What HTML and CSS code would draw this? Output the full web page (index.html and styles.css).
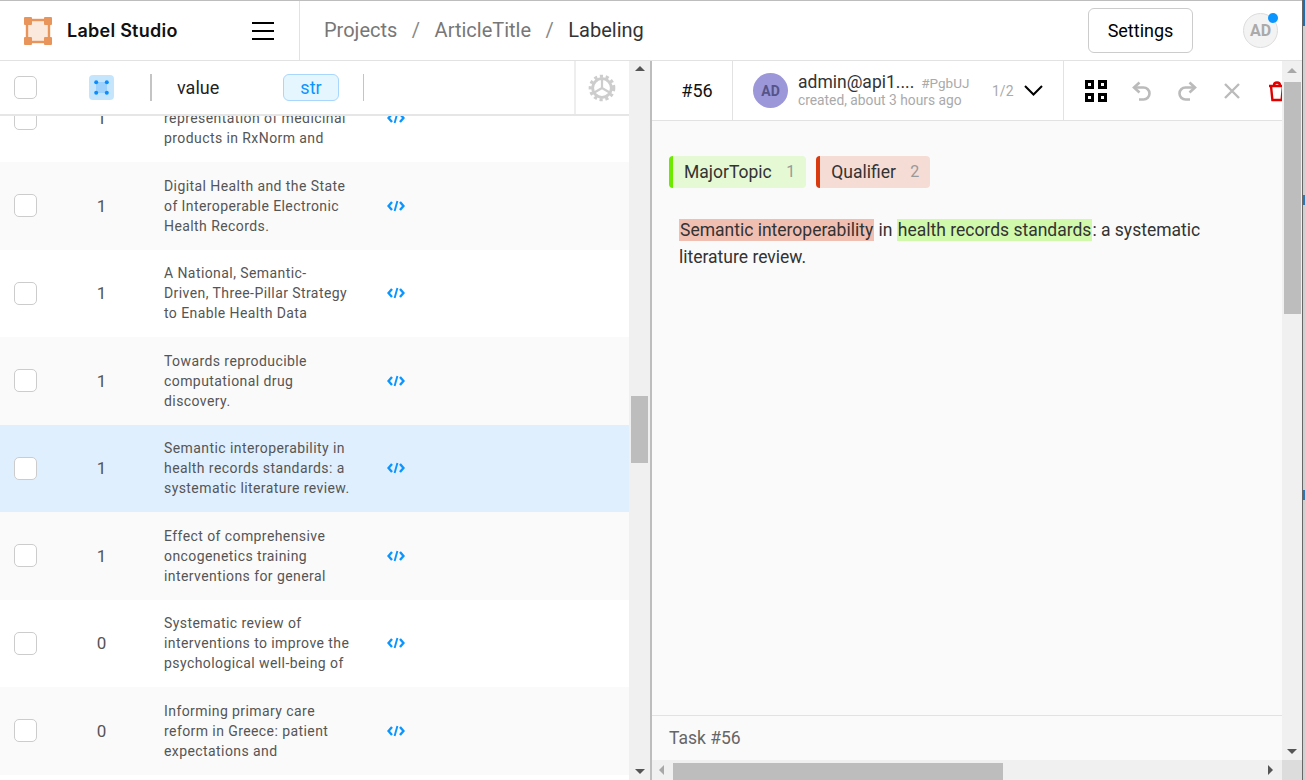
FILE: index.html
```html
<!DOCTYPE html>
<html lang="en">
<head>
  <meta charset="UTF-8" />
  <title>Label Studio</title>
  <link rel="stylesheet" href="styles.css">
</head>
<body>
  <div id="app">
    <header class="topbar">
      <div class="brand">
        <svg class="logo" width="28" height="28" viewBox="0 0 28 28">
          <rect x="3" y="3" width="22" height="22" fill="#fbe9de" stroke="#e9945a" stroke-width="2.4"/>
          <rect x="0" y="0" width="8" height="8" rx="1" fill="#e9945a"/>
          <rect x="20" y="0" width="8" height="8" rx="1" fill="#e9945a"/>
          <rect x="0" y="20" width="8" height="8" rx="1" fill="#e9945a"/>
          <rect x="20" y="20" width="8" height="8" rx="1" fill="#e9945a"/>
        </svg>
        <span class="brand-name">Label Studio</span>
        <div class="burger"><i></i><i></i><i></i></div>
      </div>
      <nav class="crumbs">
        <span>Projects</span><span class="slash">/</span><span>ArticleTitle</span><span class="slash">/</span><span class="current">Labeling</span>
      </nav>
      <button class="settings">Settings</button>
      <div class="user">AD<span class="dot"></span></div>
    </header>

    <div class="work">
      <section class="left">
        <div class="left-main">
          <div class="thead">
            <span class="check"></span>
            <span class="col-icon">
              <svg width="15" height="15" viewBox="0 0 15 15">
                <rect x="2" y="2" width="11" height="11" fill="#9ed2fc"/>
                <circle cx="2.2" cy="2.2" r="2" fill="#0a8dff"/>
                <circle cx="12.8" cy="2.2" r="2" fill="#0a8dff"/>
                <circle cx="2.2" cy="12.8" r="2" fill="#0a8dff"/>
                <circle cx="12.8" cy="12.8" r="2" fill="#0a8dff"/>
              </svg>
            </span>
            <span class="sep sep-a"></span>
            <span class="col-name">value</span>
            <span class="type-badge">str</span>
            <span class="sep sep-b"></span>
            <span class="gear-cell">
              <svg width="28" height="28" viewBox="0 0 30 30" fill="none" stroke="#cdcdcd">
                <circle cx="15" cy="15" r="10" stroke-width="3"/>
                <circle cx="15" cy="15" r="12.6" stroke-width="3.4" stroke-dasharray="3.4 2.9"/>
                <path d="M15 15V5.5M15 15l8.2 4.8M15 15l-8.2 4.8" stroke-width="2.4"/>
              </svg>
            </span>
          </div>
          <div class="rows">
            <div class="row">
              <span class="check"></span><span class="num">1</span>
              <p class="text">Assessing the<br>representation of medicinal<br>products in RxNorm and</p>
              <svg class="code" width="18" height="12" viewBox="0 0 18 12" fill="none" stroke="#0a95ff" stroke-width="2.4"><path d="M5 2L1.5 6 5 10M13 2l3.5 4L13 10"/><path d="M10.4 1L7.6 11" stroke-width="1.9"/></svg>
            </div>
            <div class="row">
              <span class="check"></span><span class="num">1</span>
              <p class="text">Digital Health and the State<br>of Interoperable Electronic<br>Health Records.</p>
              <svg class="code" width="18" height="12" viewBox="0 0 18 12" fill="none" stroke="#0a95ff" stroke-width="2.4"><path d="M5 2L1.5 6 5 10M13 2l3.5 4L13 10"/><path d="M10.4 1L7.6 11" stroke-width="1.9"/></svg>
            </div>
            <div class="row">
              <span class="check"></span><span class="num">1</span>
              <p class="text">A National, Semantic-<br>Driven, Three-Pillar Strategy<br>to Enable Health Data</p>
              <svg class="code" width="18" height="12" viewBox="0 0 18 12" fill="none" stroke="#0a95ff" stroke-width="2.4"><path d="M5 2L1.5 6 5 10M13 2l3.5 4L13 10"/><path d="M10.4 1L7.6 11" stroke-width="1.9"/></svg>
            </div>
            <div class="row">
              <span class="check"></span><span class="num">1</span>
              <p class="text">Towards reproducible<br>computational drug<br>discovery.</p>
              <svg class="code" width="18" height="12" viewBox="0 0 18 12" fill="none" stroke="#0a95ff" stroke-width="2.4"><path d="M5 2L1.5 6 5 10M13 2l3.5 4L13 10"/><path d="M10.4 1L7.6 11" stroke-width="1.9"/></svg>
            </div>
            <div class="row selected">
              <span class="check"></span><span class="num">1</span>
              <p class="text">Semantic interoperability in<br>health records standards: a<br>systematic literature review.</p>
              <svg class="code" width="18" height="12" viewBox="0 0 18 12" fill="none" stroke="#0a95ff" stroke-width="2.4"><path d="M5 2L1.5 6 5 10M13 2l3.5 4L13 10"/><path d="M10.4 1L7.6 11" stroke-width="1.9"/></svg>
            </div>
            <div class="row">
              <span class="check"></span><span class="num">1</span>
              <p class="text">Effect of comprehensive<br>oncogenetics training<br>interventions for general</p>
              <svg class="code" width="18" height="12" viewBox="0 0 18 12" fill="none" stroke="#0a95ff" stroke-width="2.4"><path d="M5 2L1.5 6 5 10M13 2l3.5 4L13 10"/><path d="M10.4 1L7.6 11" stroke-width="1.9"/></svg>
            </div>
            <div class="row">
              <span class="check"></span><span class="num">0</span>
              <p class="text">Systematic review of<br>interventions to improve the<br>psychological well-being of</p>
              <svg class="code" width="18" height="12" viewBox="0 0 18 12" fill="none" stroke="#0a95ff" stroke-width="2.4"><path d="M5 2L1.5 6 5 10M13 2l3.5 4L13 10"/><path d="M10.4 1L7.6 11" stroke-width="1.9"/></svg>
            </div>
            <div class="row">
              <span class="check"></span><span class="num">0</span>
              <p class="text">Informing primary care<br>reform in Greece: patient<br>expectations and</p>
              <svg class="code" width="18" height="12" viewBox="0 0 18 12" fill="none" stroke="#0a95ff" stroke-width="2.4"><path d="M5 2L1.5 6 5 10M13 2l3.5 4L13 10"/><path d="M10.4 1L7.6 11" stroke-width="1.9"/></svg>
            </div>
            <div class="row"></div>
          </div>
        </div>
        <div class="vbar vbar-left">
          <span class="arrow up"></span>
          <span class="thumb"></span>
          <span class="arrow down"></span>
        </div>
      </section>

      <section class="right">
        <div class="right-top">
          <div class="right-main">
            <div class="ann-bar">
              <div class="task-id">#56</div>
              <div class="annotator">
                <span class="ann-avatar">AD</span>
                <div class="ann-info">
                  <div class="ann-line"><span class="ann-name">admin@api1....</span><span class="ann-hash">#PgbUJ</span></div>
                  <div class="ann-date">created, about 3 hours ago</div>
                </div>
                <span class="ann-count">1/2</span>
                <svg class="chevron" width="19" height="11" viewBox="0 0 19 11" fill="none" stroke="#000" stroke-width="2"><path d="M1 1l8.5 8.5L18 1"/></svg>
              </div>
              <div class="tools">
                <svg width="22" height="22" viewBox="0 0 22 22" fill="none" stroke="#000" stroke-width="3"><rect x="1.5" y="1.5" width="6" height="6"/><rect x="14.5" y="1.5" width="6" height="6"/><rect x="1.5" y="14.5" width="6" height="6"/><rect x="14.5" y="14.5" width="6" height="6"/></svg>
                <svg width="20" height="20" viewBox="0 0 20 20" fill="none" stroke="#bbb" stroke-width="2.6"><path d="M7.5 1.5L2 6.5l5.5 5"/><path d="M2.5 6.5h9a6 6 0 0 1 0 12H7"/></svg>
                <svg width="20" height="20" viewBox="0 0 20 20" fill="none" stroke="#bbb" stroke-width="2.6"><path d="M12.5 1.5l5.5 5-5.5 5"/><path d="M17.5 6.5h-9a6 6 0 0 0 0 12H13"/></svg>
                <svg width="16" height="16" viewBox="0 0 16 16" fill="none" stroke="#bbb" stroke-width="2.4"><path d="M1 1l14 14M15 1L1 15"/></svg>
                <svg class="trash" width="18" height="22" viewBox="0 0 18 22" fill="none" stroke="#e00000" stroke-width="2.4"><path d="M1 6h16M6 5.5C6 1.5 12 1.5 12 5.5M3 6l1.4 14h9.2L15 6"/></svg>
              </div>
            </div>
            <div class="labeling">
              <div class="labels">
                <span class="label label-major">MajorTopic<b>1</b></span>
                <span class="label label-qual">Qualifier<b>2</b></span>
              </div>
              <p class="article"><span class="hl hl-qual">Semantic interoperability</span> in <span class="hl hl-major">health records standards</span>: a systematic literature review.</p>
            </div>
            <div class="task-foot">Task #56</div>
          </div>
          <div class="vbar vbar-right">
            <span class="arrow up"></span>
            <span class="thumb"></span>
            <span class="arrow down"></span>
          </div>
        </div>
        <div class="hbar">
          <span class="arrow left-arrow"></span>
          <span class="hthumb"></span>
          <span class="arrow right-arrow"></span>
          <span class="corner"></span>
        </div>
      </section>
    </div>
  </div>
  <div class="edge"></div>
</body>
</html>
```

FILE: styles.css
```css
* {
  box-sizing: border-box;
}
html, body {
  margin: 0;
  height: 100%;
  overflow: hidden;
}
body {
  display: flex;
  font-family: Roboto, "Liberation Sans", sans-serif;
  color: #333;
  background: #fff;
}
#app {
  width: 1302px;
  height: 780px;
  display: flex;
  flex-direction: column;
  border-top: 1px solid #bdbdbd;
}
.edge {
  width: 3px;
  border-left: 1px solid #666;
  background:
    linear-gradient(#1f6fb0 0 26px, #d0d0d0 26px 195px, #2a78b8 195px 205px, #d0d0d0 205px 490px, #2a78b8 490px 500px, #d0d0d0 500px);
}

/* top bar */
.topbar {
  height: 60px;
  flex: none;
  display: flex;
  align-items: center;
  border-bottom: 1px solid #e2e2e2;
}
.brand {
  width: 300px;
  height: 100%;
  display: flex;
  align-items: center;
  padding-left: 24px;
  border-right: 1px solid #e2e2e2;
}
.brand-name {
  margin-left: 15px;
  width: 185px;
  font-family: Inter, Roboto, sans-serif;
  font-size: 18px;
  font-weight: 600;
  letter-spacing: 0.25px;
  color: #111;
}
.burger {
  width: 22px;
  display: flex;
  flex-direction: column;
  gap: 6px;
}
.burger i {
  display: block;
  height: 2px;
  background: #000;
}
.crumbs {
  margin-left: 24px;
  padding-bottom: 2px;
  display: flex;
  font-size: 20px;
  color: #777;
}
.slash {
  margin: 0 14.5px;
  color: #888;
}
.current {
  color: #333;
}
.settings {
  margin-left: auto;
  width: 105px;
  height: 45px;
  padding-bottom: 2px;
  background: #fff;
  border: 1px solid #ccc;
  border-radius: 6px;
  font-family: inherit;
  font-size: 18px;
  color: #000;
}
.user {
  position: relative;
  width: 35px;
  height: 35px;
  margin: 0 24px 0 50px;
  display: flex;
  align-items: center;
  justify-content: center;
  border: 1px solid #ddd;
  border-radius: 50%;
  background: #f3f3f3;
  color: #aaa;
  font-size: 16px;
  font-weight: 700;
}
.dot {
  position: absolute;
  top: -1px;
  right: -1px;
  width: 10px;
  height: 10px;
  border-radius: 50%;
  background: #0a95ff;
}

/* work area */
.work {
  flex: 1;
  min-height: 0;
  display: flex;
}
.left {
  display: flex;
  flex: none;
  border-right: 2px solid #bdbdbd;
  width: 652px;
}
.left-main {
  flex: 1;
  min-width: 0;
  overflow: hidden;
  display: flex;
  flex-direction: column;
}

/* data manager table */
.thead {
  position: relative;
  z-index: 2;
  height: 55px;
  flex: none;
  display: flex;
  align-items: center;
  background: #fff;
  border-bottom: 2px solid #e6e6e6;
}
.check {
  width: 23px;
  height: 23px;
  flex: none;
  margin-left: 14px;
  background: #fff;
  border: 1px solid #ccc;
  border-radius: 5px;
}
.col-icon {
  width: 25px;
  height: 25px;
  margin-left: 52px;
  display: flex;
  align-items: center;
  justify-content: center;
  border-radius: 4px;
  background: #c5e5fd;
}
.sep {
  width: 2px;
  height: 27px;
  background: #c4c4c4;
}
.sep-a {
  margin-left: 36px;
}
.col-name {
  margin-left: 25px;
  width: 106px;
  font-size: 18px;
  color: #222;
}
.type-badge {
  width: 56px;
  height: 27px;
  display: flex;
  align-items: center;
  justify-content: center;
  border: 1px solid #a8d6fc;
  border-radius: 6px;
  background: #e6f6ff;
  color: #0a95ff;
  font-size: 18px;
}
.sep-b {
  width: 1px;
  margin-left: 24px;
}
.gear-cell {
  margin-left: auto;
  width: 55px;
  height: 100%;
  padding-right: 2px;
  display: flex;
  align-items: center;
  justify-content: center;
  border-left: 2px solid #eee;
}
.rows {
  margin-top: -41.4px;
}
.row {
  height: 87.5px;
  display: flex;
  align-items: center;
}
.row:nth-child(even) {
  background: #fafafa;
}
.row.selected {
  background: #e0effe;
}
.num {
  width: 20px;
  margin-left: 54.5px;
  text-align: center;
  font-size: 17px;
  color: #555;
}
.text {
  margin: 0 0 0 52.5px;
  width: 215px;
  font-size: 14px;
  line-height: 20px;
  color: #555;
  letter-spacing: 0.42px;
}
.code {
  margin-left: 8px;
}

/* fake scrollbars */
.vbar {
  width: 21px;
  flex: none;
  display: flex;
  flex-direction: column;
  align-items: center;
  background: #f0f0f0;
}
.thumb {
  display: block;
  width: 17px;
  background: #bdbdbd;
}
.arrow {
  display: block;
  width: 0;
  height: 0;
  border-style: solid;
  border-color: transparent;
}
.arrow.up {
  margin-top: 5px;
  border-width: 0 5px 5px;
  border-bottom-color: #555;
}
.arrow.down {
  margin-top: auto;
  margin-bottom: 6px;
  border-width: 5px 5px 0;
  border-top-color: #555;
}
.vbar-left .thumb {
  height: 67px;
  margin-top: 325px;
}
.vbar-right {
  width: 20px;
}
.vbar-right .up {
  margin-top: 7px;
  border-bottom-color: #a8a8a8;
}
.vbar-right .thumb {
  height: 232px;
  margin-top: 9px;
}
.hbar {
  height: 20px;
  flex: none;
  display: flex;
  align-items: center;
  background: #f0f0f0;
}
.left-arrow {
  margin-left: 7px;
  border-width: 5px 5px 5px 0;
  border-right-color: #a8a8a8;
}
.hthumb {
  width: 330px;
  height: 17px;
  margin: 2px 0 0 9px;
  background: #bdbdbd;
}
.right-arrow {
  margin-left: auto;
  margin-right: 9px;
  border-width: 5px 0 5px 5px;
  border-left-color: #555;
}
.corner {
  width: 20px;
  height: 100%;
  background: #dcdcdc;
}

/* labeling panel */
.right {
  flex: 1;
  min-width: 0;
  display: flex;
  flex-direction: column;
}
.right-top {
  flex: 1;
  min-height: 0;
  display: flex;
}
.right-main {
  flex: 1;
  min-width: 0;
  overflow: hidden;
  display: flex;
  flex-direction: column;
  background: #fafafa;
}
.ann-bar {
  height: 60px;
  width: 660px;
  flex: none;
  display: flex;
  align-items: center;
  background: #fff;
  border-bottom: 1px solid #e2e2e2;
}
.task-id {
  width: 81px;
  height: 100%;
  padding-left: 10px;
  display: flex;
  align-items: center;
  justify-content: center;
  border-right: 1px solid #e2e2e2;
  font-size: 18px;
  color: #111;
}
.annotator {
  width: 331px;
  height: 100%;
  display: flex;
  align-items: center;
  padding-left: 20px;
  border-right: 1px solid #e2e2e2;
}
.ann-avatar {
  width: 35px;
  height: 35px;
  flex: none;
  display: flex;
  align-items: center;
  justify-content: center;
  border-radius: 50%;
  background: #9b97d9;
  color: #55548a;
  font-size: 14px;
  font-weight: 700;
}
.ann-info {
  margin-left: 10px;
  width: 194px;
}
.ann-line {
  display: flex;
  align-items: baseline;
  line-height: 20px;
}
.ann-name {
  font-size: 17.5px;
  color: #333;
}
.ann-hash {
  margin-left: 7px;
  font-size: 13.5px;
  color: #aaa;
}
.ann-date {
  margin: -1px 0 1px;
  font-size: 13.8px;
  line-height: 16px;
  color: #aaa;
}
.ann-count {
  font-size: 14px;
  color: #aaa;
}
.chevron {
  margin-left: 10px;
}
.tools {
  display: flex;
  align-items: center;
  padding-left: 21px;
}
.tools svg {
  margin-right: 25px;
}
.tools svg:nth-child(4) {
  margin: 0 28px 0 2px;
}
.labeling {
  flex: 1;
  padding: 35px 17px 0;
}
.labels {
  display: flex;
  gap: 10px;
}
.label {
  height: 32px;
  display: flex;
  align-items: center;
  padding: 0 11px 1px 11px;
  border-left: 4px solid;
  border-radius: 4px;
  font-size: 17.5px;
  color: #333;
}
.label b {
  margin-left: 14.5px;
  font-weight: 400;
  color: #999;
  font-size: 16px;
}
.label-major {
  border-color: #6ceb00;
  background: #e5f9d5;
}
.label-qual {
  border-color: #d93a10;
  background: #f5dcd5;
}
.article {
  margin: 29px 0 0 10px;
  width: 560px;
  font-size: 17.5px;
  line-height: 27px;
  color: #333;
}
.hl {
  padding: 1px;
}
.hl-qual {
  background: #f1bfb2;
}
.hl-major {
  background: #d0f9ac;
}
.task-foot {
  height: 45px;
  flex: none;
  padding-left: 17px;
  display: flex;
  align-items: center;
  border-top: 1px solid #e2e2e2;
  font-size: 17.5px;
  color: #666;
}
```
